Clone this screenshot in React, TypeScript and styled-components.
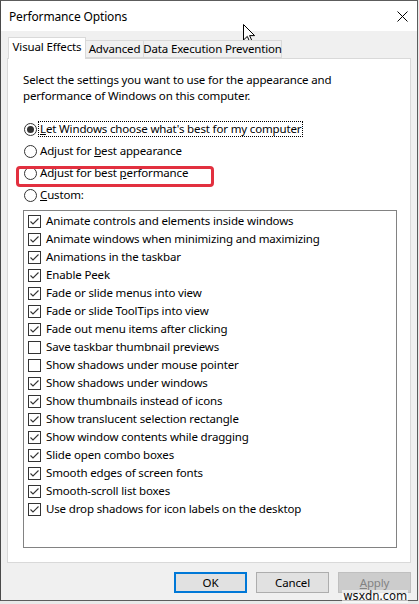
import styled, { createGlobalStyle } from "styled-components";

const GlobalStyle = createGlobalStyle`
    html, body {
        margin: 0;
        padding: 0;
        background: #e9e9e9;
    }
    * {
        box-sizing: border-box;
    }
`;

const effects: [string, boolean][] = [
    ['Animate controls and elements inside windows', true],
    ['Animate windows when minimizing and maximizing', true],
    ['Animations in the taskbar', true],
    ['Enable Peek', true],
    ['Fade or slide menus into view', true],
    ['Fade or slide ToolTips into view', true],
    ['Fade out menu items after clicking', true],
    ['Save taskbar thumbnail previews', false],
    ['Show shadows under mouse pointer', false],
    ['Show shadows under windows', true],
    ['Show thumbnails instead of icons', true],
    ['Show translucent selection rectangle', true],
    ['Show window contents while dragging', true],
    ['Slide open combo boxes', true],
    ['Smooth edges of screen fonts', true],
    ['Smooth-scroll list boxes', true],
    ['Use drop shadows for icon labels on the desktop', true],
]

function CheckMark() {
    return (
        <svg width="11" height="11" viewBox="0 0 11 11">
            <polyline points="1.5,5.5 4,8 9.5,2.5" fill="none" stroke="#333" strokeWidth="1.1" />
        </svg>
    )
}

function Cursor() {
    return (
        <svg width="13" height="20" viewBox="0 0 13 20">
            <path
                d="M0.5 0.5 L0.5 16 L4.3 12.4 L7.2 18.8 L9.4 17.8 L6.6 11.6 L11.6 11.6 Z"
                fill="#fff"
                stroke="#000"
                strokeWidth="1"
                strokeLinejoin="miter"
            />
        </svg>
    )
}

export default function App() {
    return (
        <Page>
            <GlobalStyle />
            <Window>
                <TitleBar>
                    <Title>Performance Options</Title>
                    <CloseButton>
                        <svg width="11" height="11" viewBox="0 0 11 11">
                            <path d="M0.5 0.5 L10.5 10.5 M10.5 0.5 L0.5 10.5" stroke="#000" strokeWidth="1" />
                        </svg>
                    </CloseButton>
                </TitleBar>
                <Body>
                    <TabStrip>
                        <Tab $active $width={78}>Visual Effects</Tab>
                        <Tab $width={58}>Advanced</Tab>
                        <Tab $width={138}>Data Execution Prevention</Tab>
                    </TabStrip>
                    <Panel>
                        <Description>
                            Select the settings you want to use for the appearance and
                            <br />
                            performance of Windows on this computer.
                        </Description>
                        <RadioGroup>
                            <RadioRow>
                                <Radio $checked />
                                <FocusLabel><u>L</u>et Windows choose what's best for my computer</FocusLabel>
                            </RadioRow>
                            <RadioRow>
                                <Radio />
                                <RadioLabel>Adjust for <u>b</u>est appearance</RadioLabel>
                            </RadioRow>
                            <RadioRow>
                                <Radio />
                                <RadioLabel>Adjust for best <u>p</u>erformance</RadioLabel>
                                <Highlight />
                            </RadioRow>
                            <RadioRow>
                                <Radio />
                                <RadioLabel><u>C</u>ustom:</RadioLabel>
                            </RadioRow>
                        </RadioGroup>
                        <ListBox>
                            {effects.map(([label, checked]) => (
                                <ListRow key={label}>
                                    <CheckBox>{checked && <CheckMark />}</CheckBox>
                                    <ListLabel>{label}</ListLabel>
                                </ListRow>
                            ))}
                        </ListBox>
                    </Panel>
                    <ButtonRow>
                        <Button $variant="default">OK</Button>
                        <Button>Cancel</Button>
                        <Button $variant="disabled"><u>A</u>pply</Button>
                    </ButtonRow>
                </Body>
                <CursorSpot>
                    <Cursor />
                </CursorSpot>
            </Window>
            <Watermark>wsxdn.com</Watermark>
        </Page>
    )
}


const Page = styled.div`
    position: relative;
    width: 419px;
    height: 604px;
    font-family: "Noto Sans", "Open Sans", sans-serif;
    font-size: 11.5px;
    letter-spacing: -0.15px;
    color: #000;
`;

const Window = styled.div`
    position: relative;
    display: flex;
    flex-direction: column;
    width: 418px;
    height: 601px;
    border: 1px solid #5c5c5c;
    border-left-color: #4a4a4a;
    background: #f0f0f0;
`;

const TitleBar = styled.div`
    display: flex;
    align-items: center;
    justify-content: space-between;
    height: 30px;
    padding: 0 0 0 8px;
    background: #fff;
`;

const Title = styled.span`
    font-size: 12px;
    line-height: 16px;
    padding-top: 1px;
`;

const CloseButton = styled.div`
    display: flex;
    align-items: center;
    justify-content: center;
    width: 28px;
    height: 30px;
    margin-right: 1px;
`;

const Body = styled.div`
    display: flex;
    flex-direction: column;
    flex: 1;
    padding: 6px 6px 0 6px;
`;

const TabStrip = styled.div`
    display: flex;
    align-items: flex-end;
    height: 21px;
    padding-left: 1px;
    position: relative;
    z-index: 1;
`;

const Tab = styled.div<{ $active?: boolean; $width: number }>`
    width: ${(p) => p.$width}px;
    height: ${(p) => (p.$active ? '22px' : '18px')};
    margin-bottom: ${(p) => (p.$active ? '-1px' : '0')};
    display: flex;
    align-items: center;
    justify-content: center;
    padding-bottom: ${(p) => (p.$active ? '3px' : '0')};
    background: ${(p) => (p.$active ? '#fff' : '#f0f0f0')};
    border: 1px solid #d9d9d9;
    border-bottom: ${(p) => (p.$active ? 'none' : '1px solid #d9d9d9')};
    border-left: ${(p) => (p.$active ? '1px solid #d9d9d9' : 'none')};
    white-space: nowrap;
    line-height: 16px;
`;

const Panel = styled.div`
    height: 505px;
    background: #fff;
    border: 1px solid #d9d9d9;
    padding: 13px 12px 0 15px;
    display: flex;
    flex-direction: column;
`;

const Description = styled.div`
    line-height: 16px;
    white-space: nowrap;
`;

const RadioGroup = styled.div`
    display: flex;
    flex-direction: column;
    margin-top: 14px;
`;

const RadioRow = styled.div`
    position: relative;
    display: flex;
    align-items: center;
    height: 22px;
    padding-left: 1px;
    gap: 3px;
`;

const Radio = styled.span<{ $checked?: boolean }>`
    width: 13px;
    height: 13px;
    border-radius: 50%;
    border: 1px solid #333;
    display: flex;
    align-items: center;
    justify-content: center;
    flex-shrink: 0;

    &::after {
        content: '';
        display: ${(p) => (p.$checked ? 'block' : 'none')};
        width: 7px;
        height: 7px;
        border-radius: 50%;
        background: #333;
    }
`;

const RadioLabel = styled.span`
    line-height: 16px;
    white-space: nowrap;
`;

const FocusLabel = styled(RadioLabel)`
    margin-left: -2px;
    padding: 0 1px;
    line-height: 14px;
    border: 1px dotted #000;
`;

/* red annotation box drawn over the third option */
const Highlight = styled.div`
    position: absolute;
    left: -7px;
    top: 4px;
    width: 198px;
    height: 21px;
    border: 3px solid #e2303f;
    border-radius: 4px;
`;

const ListBox = styled.div`
    margin-top: 4px;
    width: 374px;
    height: 338px;
    border: 1px solid #828282;
    padding: 1px 0 0 4px;
    display: flex;
    flex-direction: column;
`;

const ListRow = styled.div`
    display: flex;
    align-items: center;
    height: 18px;
    gap: 5px;
`;

const CheckBox = styled.span`
    width: 13px;
    height: 13px;
    border: 1px solid #333;
    display: flex;
    align-items: center;
    justify-content: center;
    flex-shrink: 0;
`;

const ListLabel = styled.span`
    line-height: 16px;
    white-space: nowrap;
`;

const ButtonRow = styled.div`
    display: flex;
    justify-content: flex-end;
    gap: 9px;
    margin-top: 9px;
    padding-right: 0;
`;

const Button = styled.div<{ $variant?: 'default' | 'disabled' }>`
    width: 73px;
    height: 21px;
    display: flex;
    align-items: center;
    justify-content: center;
    line-height: 16px;
    background: ${(p) => (p.$variant === 'disabled' ? '#cccccc' : '#e1e1e1')};
    color: ${(p) => (p.$variant === 'disabled' ? '#838383' : '#000')};
    border: ${(p) =>
        p.$variant === 'default'
            ? '2px solid #0078d7'
            : p.$variant === 'disabled'
            ? '1px solid #bfbfbf'
            : '1px solid #adadad'};
`;

const CursorSpot = styled.div`
    position: absolute;
    left: 242px;
    top: 23px;
    line-height: 0;
`;

const Watermark = styled.div`
    position: absolute;
    right: 11px;
    bottom: 1px;
    font-family: "DejaVu Sans", sans-serif;
    font-size: 11.5px;
    line-height: 13px;
    color: #111;
    background: rgba(255, 255, 255, 0.6);
    padding: 0 1px;
`;
